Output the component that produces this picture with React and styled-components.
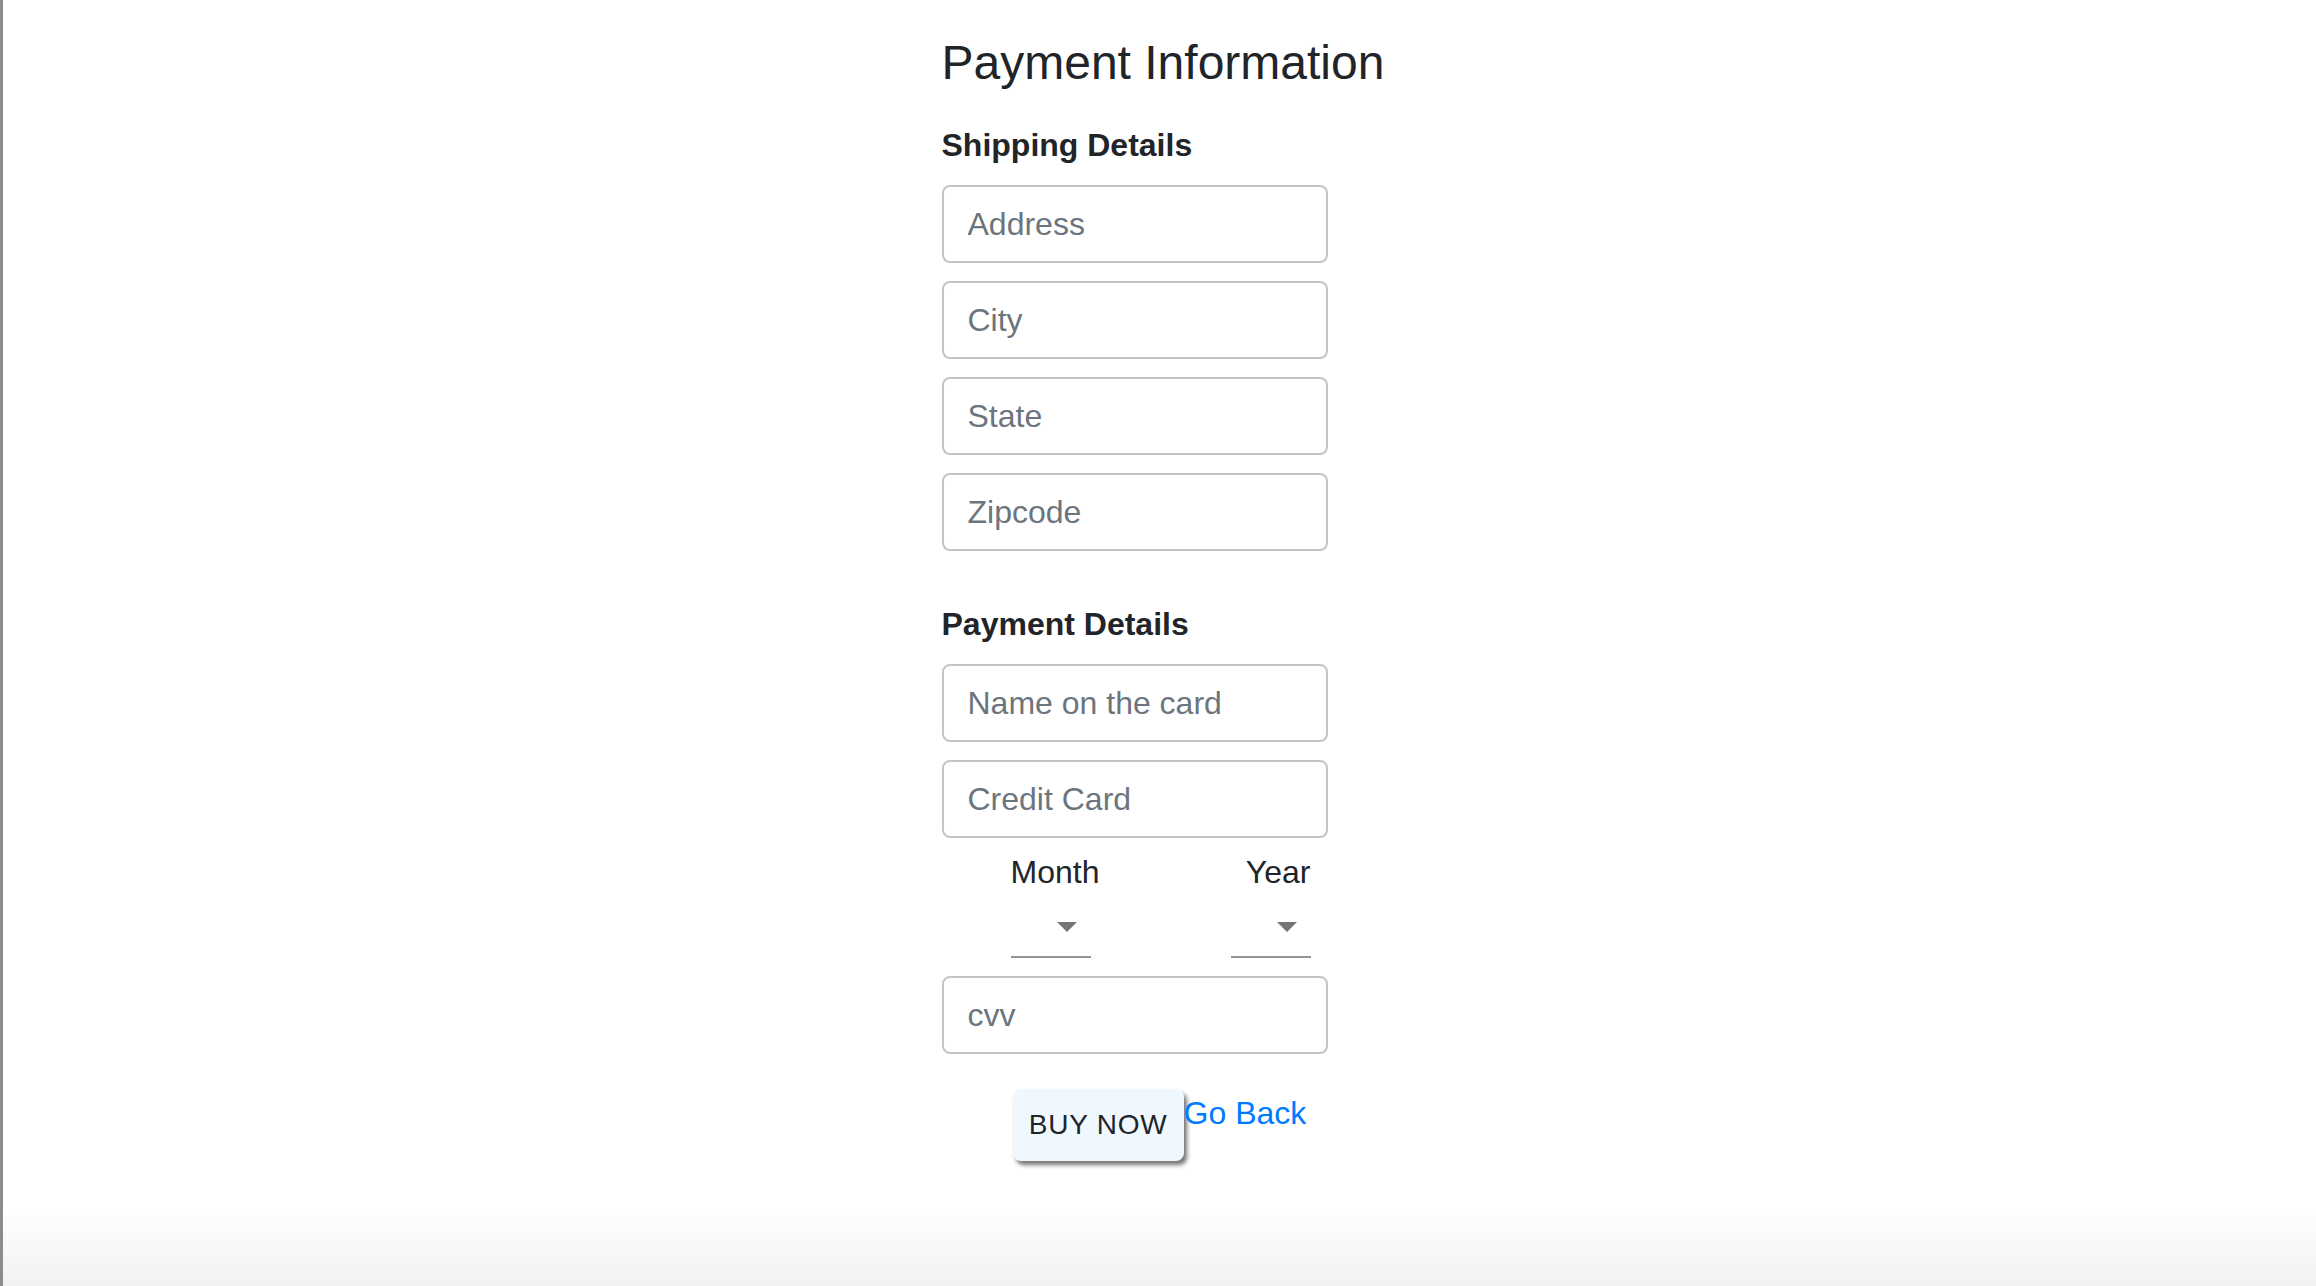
import React from 'react';
import styled, { createGlobalStyle } from 'styled-components';

const GlobalStyle = createGlobalStyle`
  html, body {
    margin: 0;
    padding: 0;
  }
  body {
    min-height: 100vh;
    font-family: "Liberation Sans", Arial, sans-serif;
    color: #212529;
    background: linear-gradient(to bottom, #ffffff calc(100% - 80px), #f2f2f2 100%);
  }
`;

const Page = styled.div`
  min-height: 100vh;
  box-sizing: border-box;
  border-left: 3px solid #8c8c8c;
  display: flex;
  justify-content: center;
  padding-top: 34px;
`;

const Column = styled.form`
  width: 436px;
  display: flex;
  flex-direction: column;
`;

const Title = styled.h1`
  margin: 0 0 34px;
  font-size: 48px;
  line-height: 58px;
  font-weight: 500;
  white-space: nowrap;
`;

const SectionTitle = styled.h2`
  margin: ${props => (props.spaced ? '36px' : '0')} 0 21px;
  font-size: 32px;
  line-height: 38px;
  font-weight: 700;
`;

const Field = styled.input`
  display: block;
  box-sizing: border-box;
  width: 386px;
  height: 78px;
  margin: 0 0 18px;
  padding: 0 24px;
  border: 2px solid #c4c4c4;
  border-radius: 8px;
  background: #fff;
  font-family: inherit;
  font-size: 32px;
  color: #495057;
  outline: none;

  &::placeholder {
    color: #6c757d;
  }
`;

const ExpiryRow = styled.div`
  display: flex;
  padding-left: 69px;
  margin-top: -3px;
  margin-bottom: 18px;
`;

const ExpiryGroup = styled.div`
  width: ${props => props.width}px;
  display: flex;
  flex-direction: column;
  align-items: ${props => (props.alignEnd ? 'flex-end' : 'flex-start')};
`;

const ExpiryLabel = styled.label`
  font-size: 32px;
  line-height: 38px;
  color: #212529;
`;

const SelectBox = styled.div`
  box-sizing: border-box;
  width: 80px;
  height: 67px;
  padding: 31px 14px 0 0;
  display: flex;
  justify-content: flex-end;
  align-items: flex-start;
  border-bottom: 2px solid #949494;
  cursor: pointer;
`;

const Actions = styled.div`
  display: flex;
  justify-content: center;
  align-items: flex-start;
  margin-top: 17px;
`;

const BuyButton = styled.button`
  height: 72px;
  padding: 0 16px;
  border: none;
  border-radius: 8px;
  background: #f0f8ff;
  box-shadow: 3px 4px 4px rgba(0, 0, 0, 0.55);
  font-family: inherit;
  font-size: 28px;
  font-weight: 500;
  letter-spacing: 0.8px;
  text-transform: uppercase;
  color: #212529;
  cursor: pointer;
`;

const BackLink = styled.a`
  margin-top: 5px;
  font-size: 32px;
  line-height: 38px;
  color: #007bff;
  text-decoration: none;
`;

const DropArrow = () => (
  <svg width="20" height="10" viewBox="0 0 20 10">
    <polygon points="0,0 20,0 10,10" fill="#757575" />
  </svg>
);

export default function App() {
  return (
    <>
      <GlobalStyle />
      <Page>
        <Column onSubmit={e => e.preventDefault()}>
          <Title>Payment Information</Title>

          <SectionTitle>Shipping Details</SectionTitle>
          <Field placeholder="Address" />
          <Field placeholder="City" />
          <Field placeholder="State" />
          <Field placeholder="Zipcode" />

          <SectionTitle spaced>Payment Details</SectionTitle>
          <Field placeholder="Name on the card" />
          <Field placeholder="Credit Card" />

          <ExpiryRow>
            <ExpiryGroup width={220}>
              <ExpiryLabel>Month</ExpiryLabel>
              <SelectBox>
                <DropArrow />
              </SelectBox>
            </ExpiryGroup>
            <ExpiryGroup width={80} alignEnd>
              <ExpiryLabel>Year</ExpiryLabel>
              <SelectBox>
                <DropArrow />
              </SelectBox>
            </ExpiryGroup>
          </ExpiryRow>

          <Field placeholder="cvv" />

          <Actions>
            <BuyButton type="submit">Buy Now</BuyButton>
            <BackLink href="#">Go Back</BackLink>
          </Actions>
        </Column>
      </Page>
    </>
  );
}
